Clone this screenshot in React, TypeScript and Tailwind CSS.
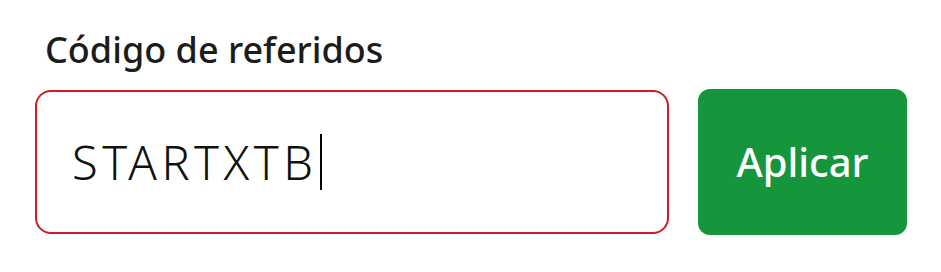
export default function App() {
  return (
    <div className="w-[941px] h-[272px] bg-white pl-[35px] pt-[28px]" style={{ fontFamily: '"Noto Sans", sans-serif' }}>
      <div className="text-[36px] leading-[44px] font-medium text-[#1c1c1c] pl-[10px]">Código de referidos</div>
      <div className="flex items-center gap-[29px] mt-[17px]">
        <div className="w-[634px] h-[144px] rounded-[16px] border-2 border-[#cf1c26] flex items-center pl-[35px]">
          <span className="text-[47px] font-light text-[#111] tracking-[4.5px]">STARTXTB</span>
          <span className="w-[2px] h-[56px] bg-black ml-[3px]" />
        </div>
        <button className="w-[209px] h-[146px] rounded-[12px] bg-[#15963d] text-white text-[40px] font-medium">Aplicar</button>
      </div>
    </div>
  );
}
